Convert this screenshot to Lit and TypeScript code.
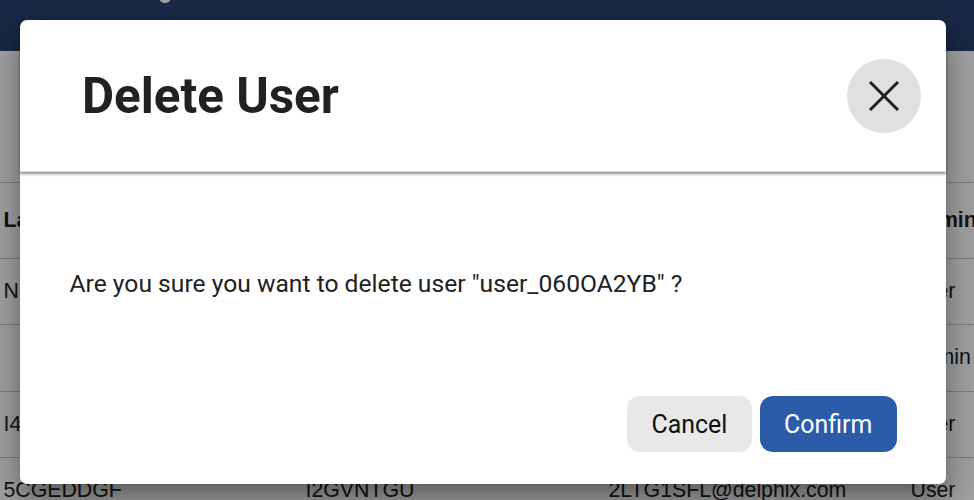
import { LitElement, html, css } from "lit";
import { customElement } from "lit/decorators.js";

@customElement("app-root")
export class AppRoot extends LitElement {
  static styles = css`
    :host {
      display: block;
      position: relative;
      width: 974px;
      height: 500px;
      overflow: hidden;
      font-family: Roboto, "Liberation Sans", sans-serif;
      background: #fff;
      color: #212121;
    }
    .topbar {
      height: 51px;
      background: #2a416f;
      display: flex;
      align-items: flex-start;
      padding-left: 160px;
    }
    .dot {
      width: 10px;
      height: 3px;
      background: #fff;
      border-radius: 0 0 50% 50% / 0 0 100% 100%;
    }
    .toolbar { height: 132px; border-bottom: 1px solid #ccc; box-sizing: border-box; }
    .row {
      display: grid;
      grid-template-columns: 302px 303px 302px 1fr;
      padding-left: 3.5px;
      height: 66.33px;
      align-items: center;
      border-bottom: 1px solid #c8c8d0;
      font-family: "Liberation Sans", Arial, sans-serif;
      font-size: 21.3px;
      white-space: nowrap;
      box-sizing: border-box;
    }
    .row.head { height: 76px; font-weight: 700; }
    .backdrop {
      position: absolute;
      inset: 0;
      background: rgba(0, 0, 0, 0.36);
    }
    .modal {
      position: absolute;
      left: 20px;
      top: 20px;
      width: 926px;
      height: 464px;
      background: #fff;
      border-radius: 7px;
      box-shadow: 0 11px 15px -7px rgba(0,0,0,.2), 0 24px 38px 3px rgba(0,0,0,.14), 0 9px 46px 8px rgba(0,0,0,.12), 0 12px 20px rgba(0,0,0,.1);
      display: flex;
      flex-direction: column;
    }
    .m-head {
      height: 152px;
      flex: none;
      box-sizing: border-box;
      padding: 0 25px 0 62px;
      display: flex;
      align-items: center;
      justify-content: space-between;
      border-bottom: 1px solid #ddd;
      box-shadow: 0 2px 3px rgba(0,0,0,.45);
      border-radius: 7px 7px 0 0;
    }
    h1 {
      margin: 0;
      font-size: 49.4px;
      font-weight: 700;
      color: #212121;
    }
    .close {
      width: 74px;
      height: 74px;
      border: 0;
      padding: 0;
      border-radius: 50%;
      background: #e0e0e0;
      display: flex;
      align-items: center;
      justify-content: center;
    }
    .close svg { width: 30px; height: 30px; stroke: #212121; stroke-width: 3; fill: none; }
    .m-body {
      flex: 1;
      padding: 95px 50px 0 49.5px;
      font-size: 24.65px;
      line-height: 33px;
      color: #212121;
    }
    .m-foot {
      display: flex;
      justify-content: flex-end;
      gap: 8px;
      padding: 0 49.5px 32px;
    }
    button.act {
      height: 56px;
      border: 0;
      border-radius: 13px;
      font: 400 24.9px Roboto, "Liberation Sans", sans-serif;
      padding: 0;
    }
    .cancel { width: 124.7px; background: #e8e8e8; color: #111; }
    .confirm { width: 136.7px; background: #2a5caa; color: #fff; }
  `;

  render() {
    const rows = [
      ["N", "", "", "User"],
      ["", "", "", "Admin"],
      ["I4", "", "", "User"],
      ["5CGEDDGF", "I2GVNTGU", "2LTG1SFL@delphix.com", "User"],
    ];
    return html`
      <div class="topbar"><div class="dot"></div></div>
      <div class="toolbar"></div>
      <div class="row head"><span>Last Name</span><span></span><span></span><span>Admin</span></div>
      ${rows.map((r) => html`<div class="row">${r.map((c) => html`<span>${c}</span>`)}</div>`)}
      <div class="backdrop"></div>
      <div class="modal" role="dialog">
        <div class="m-head">
          <h1>Delete User</h1>
          <button class="close" aria-label="Close">
            <svg viewBox="0 0 30 30"><path d="M1 1 L29 29 M29 1 L1 29"/></svg>
          </button>
        </div>
        <div class="m-body">Are you sure you want to delete user "user_060OA2YB" ?</div>
        <div class="m-foot">
          <button class="act cancel">Cancel</button>
          <button class="act confirm">Confirm</button>
        </div>
      </div>
    `;
  }
}
